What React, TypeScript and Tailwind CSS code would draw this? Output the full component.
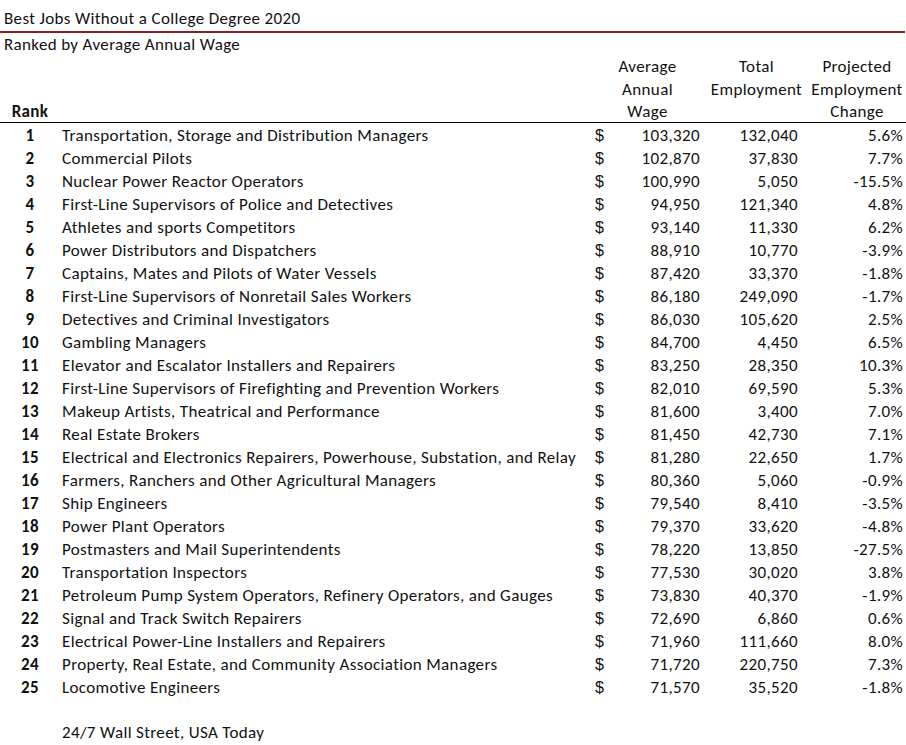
const rows: [string, string, string, string][] = [
  ['Transportation, Storage and Distribution Managers', '103,320', '132,040', '5.6%'],
  ['Commercial Pilots', '102,870', '37,830', '7.7%'],
  ['Nuclear Power Reactor Operators', '100,990', '5,050', '-15.5%'],
  ['First-Line Supervisors of Police and Detectives', '94,950', '121,340', '4.8%'],
  ['Athletes and sports Competitors', '93,140', '11,330', '6.2%'],
  ['Power Distributors and Dispatchers', '88,910', '10,770', '-3.9%'],
  ['Captains, Mates and Pilots of Water Vessels', '87,420', '33,370', '-1.8%'],
  ['First-Line Supervisors of Nonretail Sales Workers', '86,180', '249,090', '-1.7%'],
  ['Detectives and Criminal Investigators', '86,030', '105,620', '2.5%'],
  ['Gambling Managers', '84,700', '4,450', '6.5%'],
  ['Elevator and Escalator Installers and Repairers', '83,250', '28,350', '10.3%'],
  ['First-Line Supervisors of Firefighting and Prevention Workers', '82,010', '69,590', '5.3%'],
  ['Makeup Artists, Theatrical and Performance', '81,600', '3,400', '7.0%'],
  ['Real Estate Brokers', '81,450', '42,730', '7.1%'],
  ['Electrical and Electronics Repairers, Powerhouse, Substation, and Relay', '81,280', '22,650', '1.7%'],
  ['Farmers, Ranchers and Other Agricultural Managers', '80,360', '5,060', '-0.9%'],
  ['Ship Engineers', '79,540', '8,410', '-3.5%'],
  ['Power Plant Operators', '79,370', '33,620', '-4.8%'],
  ['Postmasters and Mail Superintendents', '78,220', '13,850', '-27.5%'],
  ['Transportation Inspectors', '77,530', '30,020', '3.8%'],
  ['Petroleum Pump System Operators, Refinery Operators, and Gauges', '73,830', '40,370', '-1.9%'],
  ['Signal and Track Switch Repairers', '72,690', '6,860', '0.6%'],
  ['Electrical Power-Line Installers and Repairers', '71,960', '111,660', '8.0%'],
  ['Property, Real Estate, and Community Association Managers', '71,720', '220,750', '7.3%'],
  ['Locomotive Engineers', '71,570', '35,520', '-1.8%'],
];

const cols = 'grid grid-cols-[60px_530px_115px_103px_98px]';

export default function App() {
  return (
    <div className="w-[906px] h-[745px] pt-[1px] bg-white text-[#111] text-[17px] tracking-[0.35px] font-['Calibri','Carlito','Lato',sans-serif] overflow-hidden">
      <div className="h-[30px] pt-[6px] pl-[4px] leading-[23px]">Best Jobs Without a College Degree 2020</div>
      <div className="h-[2px] w-[905px] bg-[#8a1d1d]" />
      <div className="h-[23px] pl-[4px] leading-[23px]">Ranked by Average Annual Wage</div>

      <div className={`${cols} h-[67px] border-b border-black leading-[22.5px]`}>
        <div className="flex items-end justify-center font-bold">Rank</div>
        <div />
        <div className="text-center">Average<br />Annual<br />Wage</div>
        <div className="text-center">Total<br />Employment</div>
        <div className="text-center">Projected<br />Employment<br />Change</div>
      </div>

      {rows.map(([name, wage, total, change], i) => (
        <div key={i} className={`${cols} h-[23px] leading-[25px]`}>
          <div className="text-center font-bold">{i + 1}</div>
          <div className="pl-[2px] whitespace-nowrap">{name}</div>
          <div className="flex justify-between pl-[5px] pr-[5px]">
            <span className="font-['Liberation_Sans',sans-serif] text-[16px] tracking-normal">$</span>
            <span>{wage}</span>
          </div>
          <div className="text-right pr-[10px]">{total}</div>
          <div className="text-right pr-[3px]">{change}</div>
        </div>
      ))}

      <div className="h-[23px]" />
      <div className="h-[23px] pl-[62px] leading-[23px]">24/7 Wall Street, USA Today</div>
    </div>
  );
}
